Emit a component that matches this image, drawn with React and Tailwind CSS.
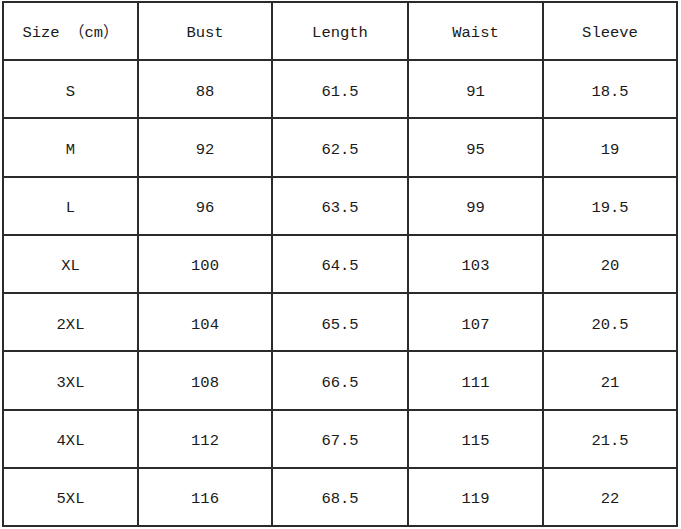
const headers = ["Size （cm）", "Bust", "Length", "Waist", "Sleeve"];

const rows = [
  ["S", "88", "61.5", "91", "18.5"],
  ["M", "92", "62.5", "95", "19"],
  ["L", "96", "63.5", "99", "19.5"],
  ["XL", "100", "64.5", "103", "20"],
  ["2XL", "104", "65.5", "107", "20.5"],
  ["3XL", "108", "66.5", "111", "21"],
  ["4XL", "112", "67.5", "115", "21.5"],
  ["5XL", "116", "68.5", "119", "22"],
];

function Row({ cells }) {
  return (
    <div className="grid flex-1 grid-cols-[135px_134px_136px_135px_134px] border-b-2 border-[#2b2b2b]">
      {cells.map((c, i) => (
        <div
          key={i}
          className="flex items-center justify-center border-r-2 border-[#2b2b2b] pt-[6px] text-[15.5px] text-[#1a1a1a]"
        >
          {c}
        </div>
      ))}
    </div>
  );
}

export default function App() {
  return (
    <div className="h-[529px] w-[681px] bg-white pl-[2px] pt-[1px]" style={{ fontFamily: '"Liberation Mono", "Noto Sans CJK SC", monospace' }}>
      <div className="flex h-[526px] w-[676px] flex-col border-l-2 border-t-2 border-[#2b2b2b]">
        <Row cells={headers} />
        {rows.map((r) => (
          <Row key={r[0]} cells={r} />
        ))}
      </div>
    </div>
  );
}
